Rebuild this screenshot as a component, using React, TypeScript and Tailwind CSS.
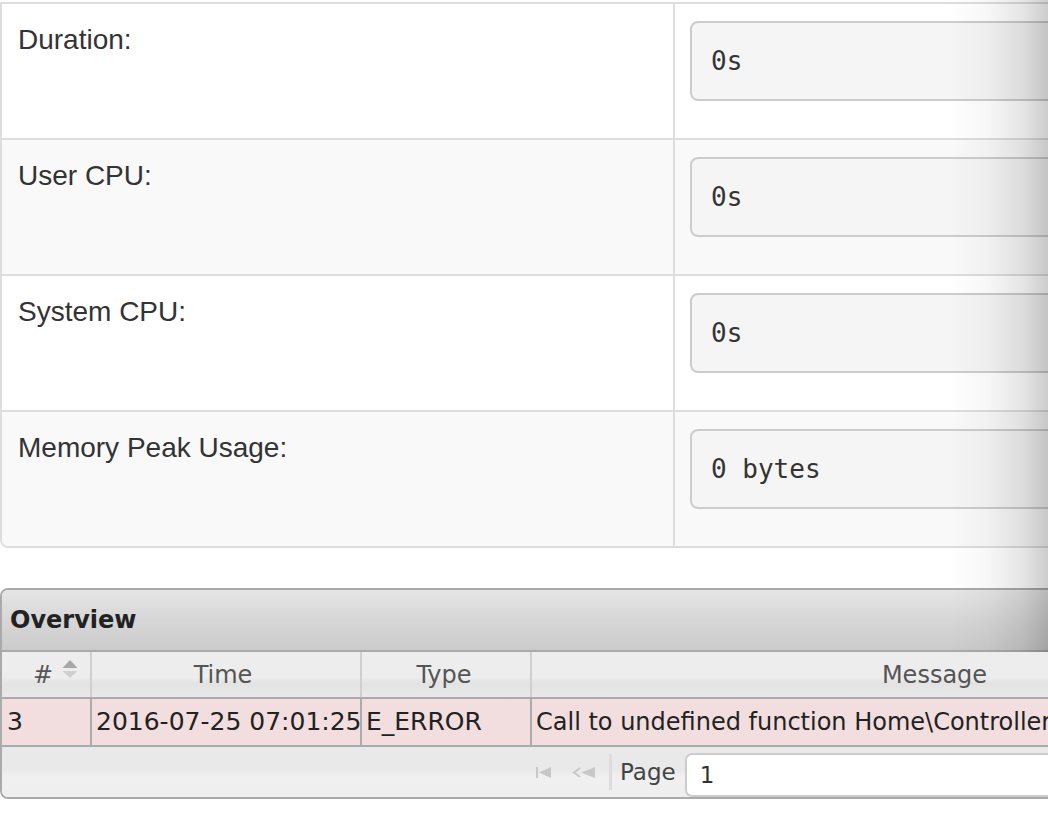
import React from "react";

const rows = [
  { label: "Duration:", value: "0s", bg: "bg-white" },
  { label: "User CPU:", value: "0s", bg: "bg-[#f9f9f9]" },
  { label: "System CPU:", value: "0s", bg: "bg-white" },
  { label: "Memory Peak Usage:", value: "0 bytes", bg: "bg-[#f9f9f9]" },
];

const sans = "font-['Liberation_Sans',Arial,sans-serif]";
const mono = "font-['DejaVu_Sans_Mono','Liberation_Mono',monospace]";
const grid = "font-['DejaVu_Sans',Verdana,sans-serif]";

function SortIcon() {
  return (
    <svg width="16" height="19" viewBox="0 0 16 19" className="absolute left-[60px] top-[8px]">
      <polygon points="8,0 15.5,8 0.5,8" fill="#a6a6a6" />
      <polygon points="8,18 15.5,11 0.5,11" fill="#d0d0d0" />
    </svg>
  );
}

function FirstIcon() {
  return (
    <svg width="16" height="11" viewBox="0 0 16 11">
      <rect x="0" y="0" width="2" height="11" fill="#c8c8c8" />
      <polygon points="3,5.5 15,0 15,11" fill="#c8c8c8" />
    </svg>
  );
}

function PrevIcon() {
  return (
    <svg width="24" height="11" viewBox="0 0 24 11">
      <polyline points="8,1 2,5.5 8,10" fill="none" stroke="#c8c8c8" strokeWidth="2" />
      <polygon points="9,5.5 23,0 23,11" fill="#c8c8c8" />
    </svg>
  );
}

export default function App() {
  return (
    <div className="relative w-[1048px] h-[840px] overflow-hidden bg-white">
      <div className="w-[1400px] pt-[2px]">
        <div className="border-2 border-[#ddd] rounded-b-[8px] overflow-hidden">
          {rows.map((r, i) => (
            <div
              key={i}
              className={`flex h-[134px] box-content ${r.bg} ${i > 0 ? "border-t-2 border-[#ddd]" : ""}`}
            >
              <div className={`w-[671px] shrink-0 pl-[16px] pt-[16px] text-[28px] leading-[40px] text-[#333] ${sans}`}>
                {r.label}
              </div>
              <div className="flex-1 border-l-2 border-[#ddd] pl-[15px] pt-[17px]">
                <div
                  className={`w-[700px] h-[80px] flex items-center border-2 border-[#ccc] rounded-[8px] bg-[#f5f5f5] px-[19px] text-[26px] text-[#333] ${mono}`}
                >
                  {r.value}
                </div>
              </div>
            </div>
          ))}
        </div>

        <div className={`mt-[40px] border-2 border-[#aaa] rounded-[8px] overflow-hidden ${grid}`}>
          <div className="h-[60px] box-content border-b-2 border-[#aaa] bg-[linear-gradient(to_bottom,#e6e6e6,#d7d7d7_50%,#cbcbcb)] flex items-center pl-[8px]">
            <span className="text-[24px] font-bold text-[#222]">Overview</span>
          </div>

          <div className="flex h-[45px] box-content border-b-2 border-[#aaa] bg-[linear-gradient(to_bottom,#ededed,#ededed_55%,#e3e3e3_70%,#e9e9e9)] text-[24px] text-[#555]">
            <div className="relative w-[90px] shrink-0 border-r-2 border-[#cfcfcf] flex items-center justify-center pr-[6px]">
              #
              <SortIcon />
            </div>
            <div className="w-[270px] shrink-0 border-r-2 border-[#cfcfcf] flex items-center justify-center pr-[6px]">
              Time
            </div>
            <div className="w-[170px] shrink-0 border-r-2 border-[#cfcfcf] flex items-center justify-center pr-[4px]">
              Type
            </div>
            <div className="w-[805px] shrink-0 flex items-center justify-center">Message</div>
          </div>

          <div className="flex h-[46px] box-content border-b-2 border-[#aaa] bg-[#f2dede] text-[25px] text-[#222] whitespace-nowrap">
            <div className="w-[90px] shrink-0 border-r-2 border-[#aaa] flex items-center pl-[5px] overflow-hidden">3</div>
            <div className="w-[270px] shrink-0 border-r-2 border-[#aaa] flex items-center pl-[4px] overflow-hidden">
              2016-07-25 07:01:25
            </div>
            <div className="w-[170px] shrink-0 border-r-2 border-[#aaa] flex items-center pl-[4px] overflow-hidden">
              E_ERROR
            </div>
            <div className="w-[805px] shrink-0 flex items-center pl-[4px] overflow-hidden text-[24px]">
              Call to undefined function Home\Controller
            </div>
          </div>

          <div className="h-[50px] flex items-center bg-[linear-gradient(to_bottom,#e9e9e9,#e9e9e9_45%,#f0f0f0_60%,#efefef)]">
            <div className="ml-[534px] flex items-center h-full">
              <FirstIcon />
              <div className="ml-[20px]">
                <PrevIcon />
              </div>
              <div className="ml-[13px] w-[3px] h-[36px] bg-[#dcdcdc]" />
              <span className="ml-[8px] text-[23px] text-[#444]">Page</span>
              <div className="ml-[9px] mt-[6px] self-start h-[44px] w-[500px] bg-white border-2 border-[#ccc] rounded-[7px] flex items-center pl-[13px] text-[23px] text-[#333]">
                1
              </div>
            </div>
          </div>
        </div>
      </div>

      <div className="pointer-events-none absolute right-0 top-0 w-[100px] h-[652px] bg-[linear-gradient(to_right,rgba(0,0,0,0),rgba(0,0,0,0.03)_40%,rgba(0,0,0,0.1)_75%,rgba(0,0,0,0.2))]" />
    </div>
  );
}
